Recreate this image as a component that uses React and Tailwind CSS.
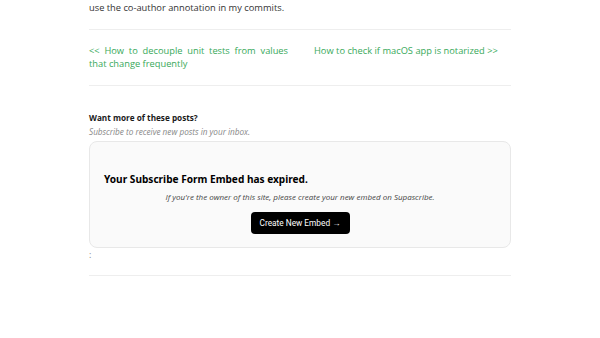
export default function App() {
  return (
    <div className="w-[600px] h-[338px] bg-white overflow-hidden" style={{ fontFamily: '"Open Sans", sans-serif' }}>
      <div className="w-[422px] ml-[89px]">
        <p className="text-[9.3px] leading-[16px] text-[#333]">use the co-author annotation in my commits.</p>
        <div className="mt-[13px] border-t border-[#eee]" />
        <div className="grid grid-cols-[199px_1fr] gap-[26px] pt-[14px] pb-[15px] text-[9.3px] leading-[13px] text-[#38a95a]">
          <a className="text-justify">&lt;&lt; How to decouple unit tests from values that change frequently</a>
          <a>How to check if macOS app is notarized &gt;&gt;</a>
        </div>
        <div className="border-t border-[#eee]" />
        <div className="pt-[26px]">
          <p className="text-[8.2px] leading-[12px] font-bold text-[#1a1a1a]">Want more of these posts?</p>
          <p className="mt-[2px] text-[8.2px] leading-[12px] italic text-[#888]">Subscribe to receive new posts in your inbox.</p>
          <div className="mt-[3px] h-[107px] rounded-[8px] border border-[#e8e8e8] bg-[#fafafa] px-[14px] pt-[30px]" style={{ fontFamily: '"Noto Sans", sans-serif' }}>
            <p className="text-[10.1px] leading-[14px] font-bold text-black">Your Subscribe Form Embed has expired.</p>
            <p className="mt-[4.5px] text-center text-[8px] leading-[11px] italic text-[#444]" style={{ fontFamily: '"Open Sans", sans-serif' }}>If you're the owner of this site, please create your new embed on Supascribe.</p>
            <div className="mt-[10.5px] flex justify-center">
              <button className="h-[22px] w-[99px] rounded-[4px] bg-black text-white text-[8.3px] leading-[22px]" style={{ fontFamily: 'Roboto, sans-serif' }}>Create New Embed →</button>
            </div>
          </div>
          <p className="mt-[2px] text-[9px] leading-[10px] text-[#888]">:</p>
          <div className="mt-[15px] border-t border-[#eee]" />
        </div>
      </div>
    </div>
  );
}
